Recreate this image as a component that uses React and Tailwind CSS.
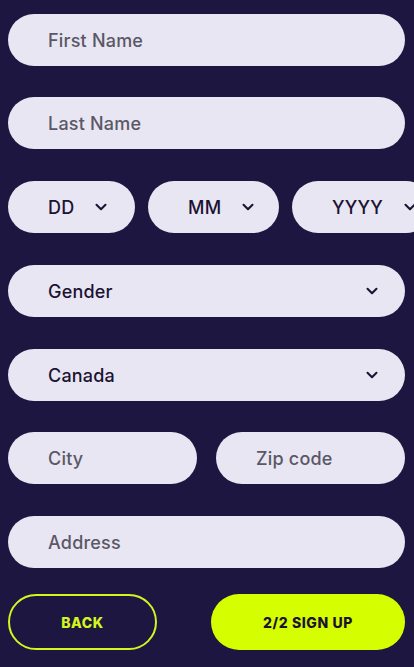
import { ChevronDown } from "lucide-react";

const font = { fontFamily: "Inter, 'Noto Sans', sans-serif" };

const Field = ({ placeholder, className = "" }) => (
  <div
    className={`h-[52px] rounded-full bg-[#e7e6f2] flex items-center pl-10 text-[18px] font-medium tracking-[0.2px] text-[#5b5766] ${className}`}
  >
    {placeholder}
  </div>
);

const Select = ({ value, className = "", compact }) => (
  <div
    className={`h-[52px] rounded-full bg-[#e7e6f2] flex items-center pl-10 text-[18px] font-medium tracking-[0.2px] text-[#1c1232] shrink-0 ${
      compact ? "gap-[18px]" : "justify-between pr-[24px]"
    } ${className}`}
  >
    <span>{value}</span>
    <ChevronDown size={18} strokeWidth={2.75} className="text-[#1c1232]" />
  </div>
);

export default function App() {
  return (
    <div
      className="w-[414px] h-[667px] overflow-hidden bg-[#1c1640] px-2 pt-[14px] flex flex-col"
      style={font}
    >
      <div className="flex flex-col pr-[1px]">
        <Field placeholder="First Name" />
        <Field placeholder="Last Name" className="mt-[31px]" />
        <div className="flex gap-[13px] mt-[32px] mr-[-40px]">
          <Select value="DD" compact className="w-[127px]" />
          <Select value="MM" compact className="w-[131px]" />
          <Select value="YYYY" compact className="w-[140px]" />
        </div>
        <Select value="Gender" className="mt-[32px]" />
        <Select value="Canada" className="mt-[32px]" />
        <div className="flex gap-[19px] mt-[31px]">
          <Field placeholder="City" className="flex-1" />
          <Field placeholder="Zip code" className="flex-1" />
        </div>
        <Field placeholder="Address" className="mt-[32px]" />
      </div>
      <div className="flex justify-between mt-[26px] pr-[1px]">
        <button className="w-[149px] h-[56px] rounded-full border-2 border-[#d4f51f] text-[#d4f51f] text-[14px] font-extrabold tracking-[0.6px]">
          BACK
        </button>
        <button className="w-[194px] h-[56px] rounded-full bg-[#d5ff00] text-[#1c1232] text-[14px] font-extrabold tracking-[0.6px]">
          2/2 SIGN UP
        </button>
      </div>
    </div>
  );
}
